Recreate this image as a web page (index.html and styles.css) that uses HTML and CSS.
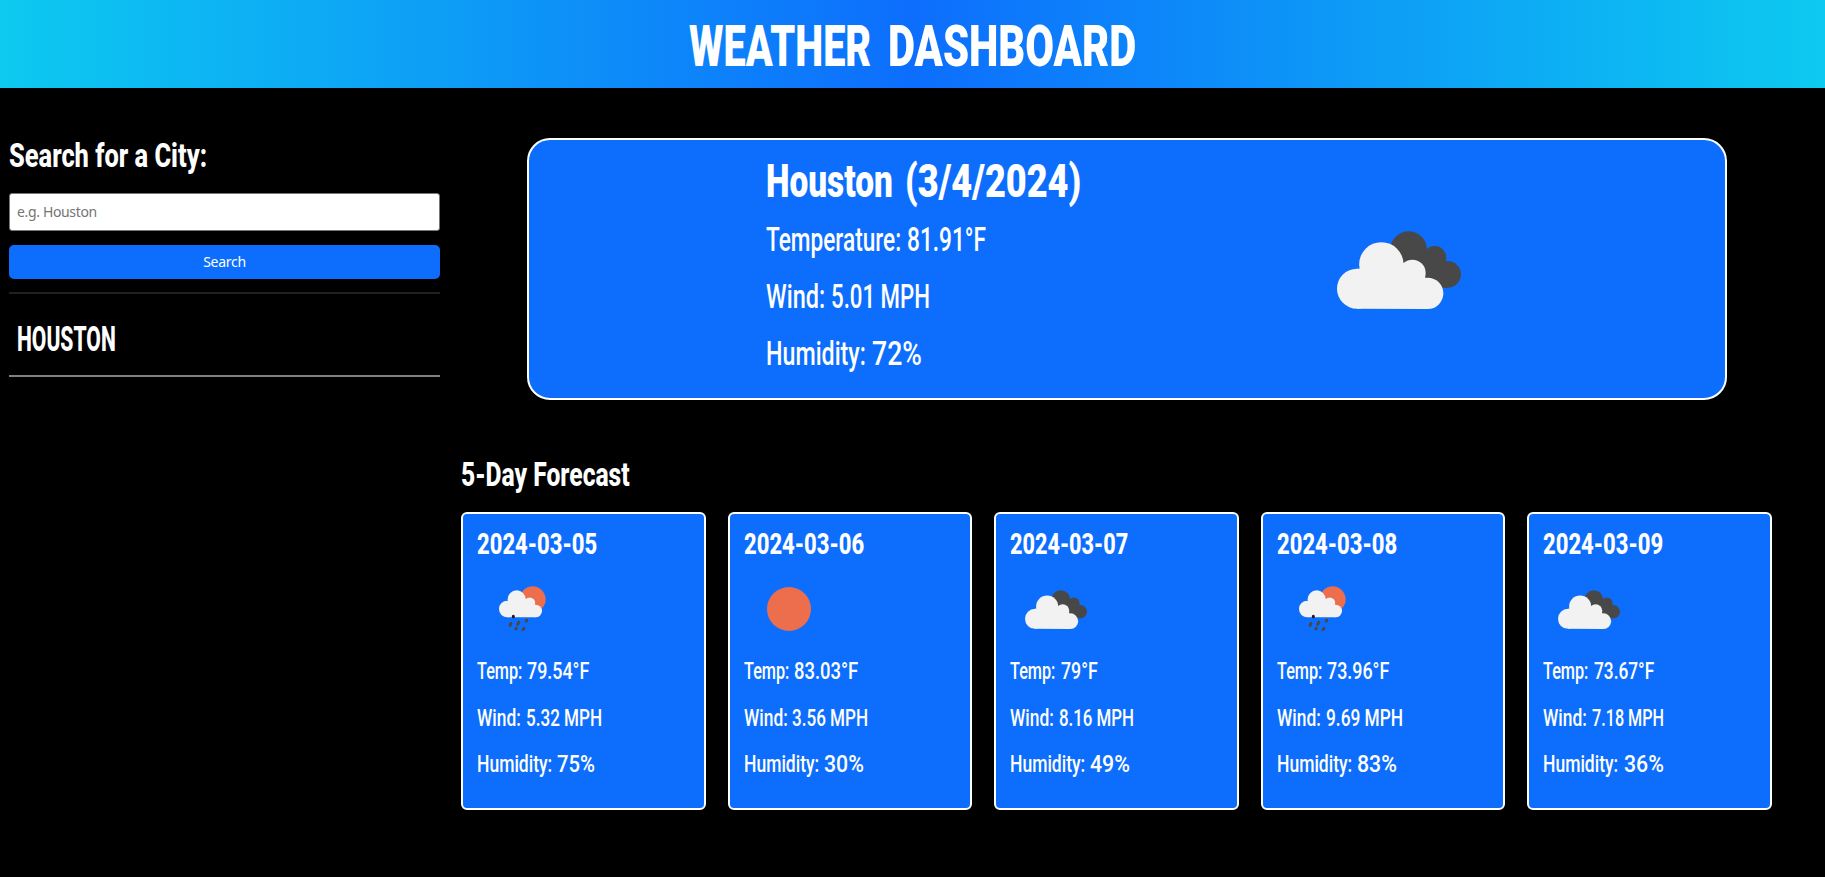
FILE: index.html
```html
<!DOCTYPE html>
<html lang="en">
<head>
<meta charset="utf-8">
<title>Weather Dashboard</title>
<link rel="stylesheet" href="styles.css">
</head>
<body>
<svg class="defs" width="0" height="0" aria-hidden="true">
  <symbol id="cloudy" viewBox="114 92 372 234">
    <g fill="#484848"><circle cx="329" cy="148" r="55"/><circle cx="407" cy="172" r="35"/><circle cx="446" cy="222" r="40"/><path d="M300 150h84l56 33 6 79h-80z"/></g>
    <g fill="#f2f2f2"><circle cx="174" cy="265" r="60"/><circle cx="247" cy="192" r="66.500"/><circle cx="340" cy="218" r="40"/><circle cx="386" cy="279" r="47"/><path d="M174 325V205h10l129-18 67 45 6 94z"/></g>
  </symbol>
  <symbol id="sun" viewBox="0 0 44 44"><circle cx="22" cy="22" r="22" fill="#ec6e4c"/></symbol>
  <symbol id="rain" viewBox="147 444 141 135">
    <circle cx="248" cy="484" r="39" fill="#ec6e4c"/>
    <g fill="#f2f2f2"><circle cx="172" cy="513" r="25"/><circle cx="200" cy="484" r="27"/><circle cx="239" cy="495" r="16.500"/><circle cx="257" cy="519" r="19"/><path d="M172 538v-49l55-7 28 18 2 38z"/></g>
    <g stroke="#484848" stroke-width="9" stroke-linecap="round"><path d="M190 535v1" stroke="#1c1c1c"/><path d="M183 556l-3 6M206 553l-3 6M230 547l-1 2M199 571l-1 2M222 571l-3 4"/></g>
  </symbol>
</svg>
<header class="banner"><h1 class="title"><span class="fit" data-w="182">WEATHER</span> <span class="fit" data-w="248">DASHBOARD</span></h1></header>
<div class="page">
  <aside class="sidebar">
    <h2 class="heading"><span class="fit" data-w="198">Search for a City:</span></h2>
    <input class="city-input" type="text" placeholder="e.g. Houston">
    <button class="search">Search</button>
    <hr class="rule">
    <div class="history"><span class="fit" data-w="99">HOUSTON</span></div>
  </aside>
  <main class="content">
    <section class="today">
      <div class="today-text">
        <h2 class="place"><span class="fit" data-w="127">Houston</span> <span class="fit" data-w="176">(3/4/2024)</span></h2>
        <p><span class="fit" data-w="135">Temperature:</span> <span class="fit" data-w="79">81.91°F</span></p>
        <p><span class="fit" data-w="59">Wind:</span> <span class="fit" data-w="99">5.01 MPH</span></p>
        <p><span class="fit" data-w="100">Humidity:</span> <span class="fit" data-w="50">72%</span></p>
      </div>
      <svg class="today-icon"><use href="#cloudy"/></svg>
    </section>
    <h2 class="heading forecast-heading"><span class="fit" data-w="169">5-Day Forecast</span></h2>
    <section class="forecast">
      <article class="day">
        <h3><span class="fit" data-w="120">2024-03-05</span></h3>
        <div class="icon"><svg class="i-rain"><use href="#rain"/></svg></div>
        <p><span class="fit" data-w="45">Temp:</span> <span class="fit" data-w="62">79.54°F</span></p>
        <p><span class="fit" data-w="44">Wind:</span> <span class="fit" data-w="76">5.32 MPH</span></p>
        <p><span class="fit" data-w="75">Humidity:</span> <span class="fit" data-w="38">75%</span></p>
      </article>
      <article class="day">
        <h3><span class="fit" data-w="120">2024-03-06</span></h3>
        <div class="icon"><svg class="i-sun"><use href="#sun"/></svg></div>
        <p><span class="fit" data-w="45">Temp:</span> <span class="fit" data-w="64">83.03°F</span></p>
        <p><span class="fit" data-w="44">Wind:</span> <span class="fit" data-w="76">3.56 MPH</span></p>
        <p><span class="fit" data-w="75">Humidity:</span> <span class="fit" data-w="40">30%</span></p>
      </article>
      <article class="day">
        <h3><span class="fit" data-w="118">2024-03-07</span></h3>
        <div class="icon"><svg class="i-cloud"><use href="#cloudy"/></svg></div>
        <p><span class="fit" data-w="45">Temp:</span> <span class="fit" data-w="37">79°F</span></p>
        <p><span class="fit" data-w="44">Wind:</span> <span class="fit" data-w="75">8.16 MPH</span></p>
        <p><span class="fit" data-w="75">Humidity:</span> <span class="fit" data-w="40">49%</span></p>
      </article>
      <article class="day">
        <h3><span class="fit" data-w="120">2024-03-08</span></h3>
        <div class="icon"><svg class="i-rain"><use href="#rain"/></svg></div>
        <p><span class="fit" data-w="45">Temp:</span> <span class="fit" data-w="62">73.96°F</span></p>
        <p><span class="fit" data-w="44">Wind:</span> <span class="fit" data-w="77">9.69 MPH</span></p>
        <p><span class="fit" data-w="75">Humidity:</span> <span class="fit" data-w="40">83%</span></p>
      </article>
      <article class="day">
        <h3><span class="fit" data-w="120">2024-03-09</span></h3>
        <div class="icon"><svg class="i-cloud"><use href="#cloudy"/></svg></div>
        <p><span class="fit" data-w="45">Temp:</span> <span class="fit" data-w="60">73.67°F</span></p>
        <p><span class="fit" data-w="44">Wind:</span> <span class="fit" data-w="72">7.18 MPH</span></p>
        <p><span class="fit" data-w="75">Humidity:</span> <span class="fit" data-w="40">36%</span></p>
      </article>
    </section>
  </main>
</div>
<script src="fit.js"></script>
</body>
</html>
```
FILE: styles.css
```css
* { box-sizing: border-box; }
body { margin: 0; background: #000; color: #fff; font-family: Roboto, "Liberation Sans", sans-serif; overflow: hidden; }
h1, h2, h3, p { margin: 0; }
.defs { display: block; }
.fit { display: inline-block; white-space: nowrap; transform-origin: left center; }

.banner { height: 87.5px; background: linear-gradient(90deg, #0dcaf0, #0d6efd 50%, #0dcaf0); }
.title { display: flex; justify-content: center; gap: 16px; font-size: 57.5px; font-weight: 900; line-height: 94px; }

.page { display: flex; }
.sidebar { width: 440px; padding: 45px 0 0 9px; display: flex; flex-direction: column; }
.heading { font-size: 32.5px; font-weight: 800; line-height: 46px; }
.city-input { height: 38px; margin-top: 14px; padding: 0 7px; border: 1px solid #767676; border-radius: 3px; font: 14px "Noto Sans", sans-serif; letter-spacing: -0.35px; }
.city-input::placeholder { color: #757575; }
.search { height: 34px; margin-top: 14px; border: 0; border-radius: 5px; background: #0d6efd; color: #fff; font: 14px "Noto Sans", sans-serif; letter-spacing: -0.3px; }
.rule { width: 100%; height: 2px; margin: 13px 0 0; border: 0; background: #212121; }
.history { height: 83px; padding-left: 8px; border-bottom: 2px solid #808080; font-size: 34.5px; font-weight: 800; line-height: 91px; }

.content { padding: 50px 0 0 21px; }
.today { width: 1200px; height: 262px; margin-left: 66px; padding-left: 237px; display: flex; border: 2px solid #fff; border-radius: 23px; background: #0d6efd; }
.today-text { width: 571px; padding-top: 12px; font-size: 33px; font-weight: 500; }
.today-text p { display: flex; gap: 6px; height: 57px; line-height: 56px; }
.place { display: flex; gap: 12px; font-size: 45.5px; font-weight: 900; line-height: 60px; }
.today-icon { width: 124px; height: 78px; margin-top: 91px; }

.forecast-heading { margin-top: 52px; }
.forecast { display: grid; grid-template-columns: repeat(5, 244.500px); column-gap: 22.100px; margin-top: 14.500px; }
.day { height: 298px; padding: 7px 0 0 14px; border: 2px solid #fff; border-radius: 6px; background: #0d6efd; font-size: 24.500px; font-weight: 500; }
.day h3 { font-size: 29px; font-weight: 800; line-height: 46px; }
.day p { display: flex; gap: 5px; height: 46.500px; line-height: 46.500px; }
.icon { height: 81px; }
.icon svg { display: block; }
.icon::before { content: ""; display: block; height: 19px; }
.i-rain { width: 47px; height: 45px; margin-left: 22px; }
.i-sun { width: 44px; height: 44px; margin: 20px 0 0 23px; }
.i-cloud { width: 62px; height: 39px; margin: 4px 0 0 15px; }
.icon .i-sun { margin-top: 1px; }
```
FILE: fit.js
```js
// Condense each label horizontally to its display width.
document.querySelectorAll('.fit').forEach(function (el) {
  var full = el.offsetWidth;
  el.style.transform = 'scaleX(' + (el.dataset.w / full).toFixed(4) + ')';
  el.style.marginRight = (el.dataset.w - full) + 'px';
});
```
